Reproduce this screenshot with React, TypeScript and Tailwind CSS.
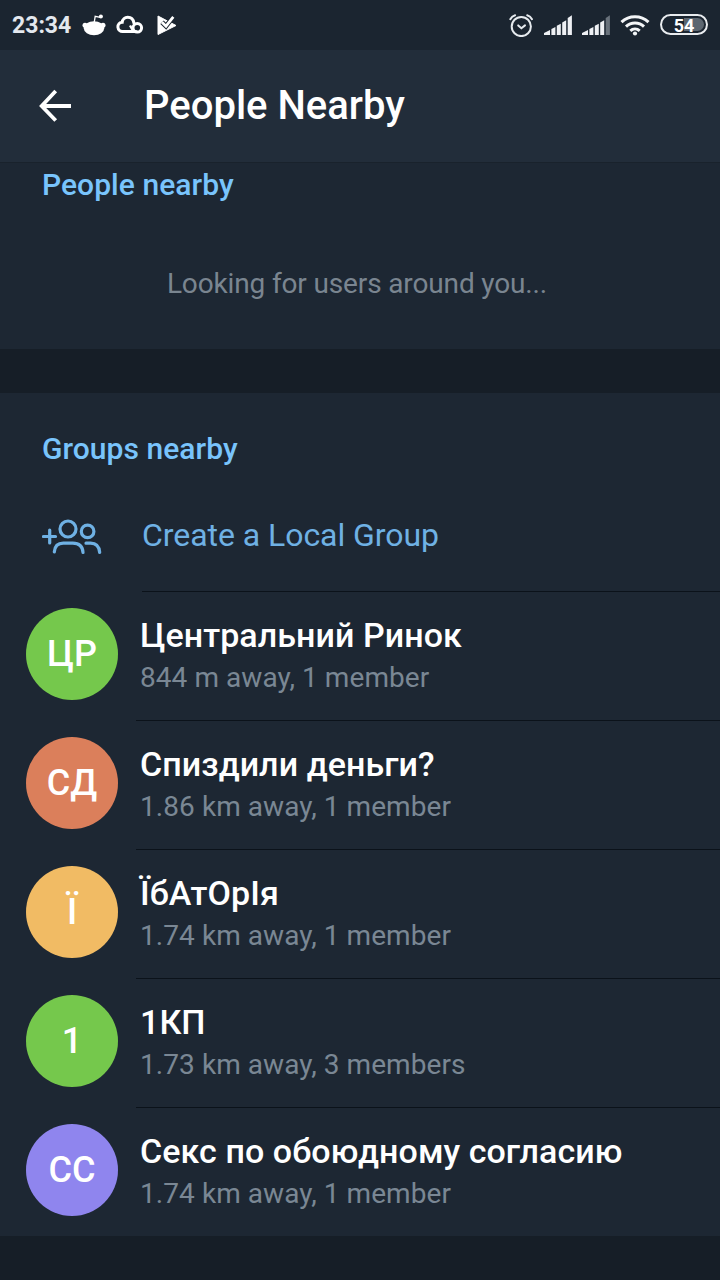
interface Group {
  initials: string;
  name: string;
  info: string;
  color: string;
}

const GROUPS: Group[] = [
  { initials: 'ЦР', name: 'Центральний Ринок', info: '844 m away, 1 member', color: 'bg-[#75c84c]' },
  { initials: 'СД', name: 'Спиздили деньги?', info: '1.86 km away, 1 member', color: 'bg-[#db7f5b]' },
  { initials: 'Ї', name: 'ЇбАтОрІя', info: '1.74 km away, 1 member', color: 'bg-[#f1bb64]' },
  { initials: '1', name: '1КП', info: '1.73 km away, 3 members', color: 'bg-[#75c84c]' },
  { initials: 'СС', name: 'Секс по обоюдному согласию', info: '1.74 km away, 1 member', color: 'bg-[#8f85ee]' },
];

function RedditIcon() {
  return (
    <svg className="ml-3 w-6 h-6 shrink-0" viewBox="0 0 24 24" fill="#fff">
      <ellipse cx="12" cy="15.200" rx="10.200" ry="7" />
      <circle cx="3" cy="12.200" r="2.500" />
      <circle cx="21" cy="12.200" r="2.500" />
      <path d="M12.200 9.500l1-6.200 5 1" fill="none" stroke="#fff" strokeWidth="1.300" />
      <circle cx="18.900" cy="3.400" r="2" />
    </svg>
  );
}

function CloudIcon() {
  return (
    <svg className="ml-[10px] w-7 h-6 shrink-0" viewBox="0 0 28 24" fill="none" stroke="#fff">
      <path d="M20 18.500H6.800a4.600 4.600 0 01-.6-9.200C6.500 6 9 4.300 11.700 4.300c3.400 0 5.700 2.400 6.200 5.700" strokeWidth="3" strokeLinecap="round" />
      <path d="M14 12.500l3.500 6" strokeWidth="2.400" />
      <circle cx="21.300" cy="14.800" r="4.300" strokeWidth="3" />
    </svg>
  );
}

function PlayCheckIcon() {
  return (
    <svg className="ml-[13px] w-5 h-6 shrink-0" viewBox="0 0 20 24">
      <path d="M1 3v18.500L19 12.500 1 3z" fill="#fff" stroke="#fff" strokeLinejoin="round" />
      <path d="M5 9.200l4 4L16 4" fill="none" stroke="#1b2530" strokeWidth="4.800" />
      <path d="M5 9.200l4 4 7.300-9.300" fill="none" stroke="#fff" strokeWidth="2.800" />
    </svg>
  );
}

function AlarmIcon() {
  return (
    <svg className="w-6 h-6 shrink-0" viewBox="0 0 24 24" fill="none" stroke="#e6eaee" strokeWidth="2" strokeLinecap="round">
      <circle cx="12.300" cy="13.500" r="9.600" />
      <path d="M9.200 12.400l3.200 2.800 3.600-2.800" />
      <path d="M1.300 6.200Q2.800 3.200 6.100 2.200M23 6.200Q21.500 3.200 18.200 2.200" />
    </svg>
  );
}

function SignalIcon({ weak }: { weak?: boolean }) {
  return (
    <svg className="w-7 h-5 shrink-0" viewBox="0 0 28 20" fill="#eef0f3">
      <path d="M0 20v-2L6 15v5zM7.400 20v-6l4-2v8zM12.800 20v-9.200l4-2V20zM18.200 20V7.400l4-2.200V20z" />
      <path d="M23.700 20V3l4.200-2.700V20z" fill={weak ? '#69727b' : '#eef0f3'} />
    </svg>
  );
}

function WifiIcon() {
  return (
    <svg className="ml-[10px] w-[30px] h-[22px] shrink-0" viewBox="0 0 30 22" fill="none" stroke="#f3f5f7" strokeWidth="3">
      <path d="M1.500 8.200a19.500 19.500 0 0127 0" />
      <path d="M6 12.700a13 13 0 0118 0" />
      <path d="M10.300 16.800a7 7 0 019.400 0" />
      <circle cx="15" cy="19.500" r="2.100" fill="#f3f5f7" stroke="none" />
    </svg>
  );
}

function StatusBar() {
  return (
    <div className="flex items-center h-[50px] pl-3 pr-3 bg-[#1b2530]">
      <span className="w-[58px] text-[23px] leading-[52px] pt-px font-bold text-[#e3e8ee]">23:34</span>
      <RedditIcon />
      <CloudIcon />
      <PlayCheckIcon />
      <div className="ml-auto flex items-center">
        <AlarmIcon />
        <div className="ml-[11px] flex gap-[10px]">
          <SignalIcon />
          <SignalIcon weak />
        </div>
        <WifiIcon />
        <div className="ml-[10px] -mt-px w-12 h-[21px] rounded-full border-2 border-[#e9ecef] p-[2px]">
          <div className="h-full rounded-full bg-linear-to-r from-transparent from-50% to-[#5c6670] to-50% flex items-center justify-center text-[18px] leading-[18px] font-bold text-white">
            <span className="pt-[2px]">54</span>
          </div>
        </div>
      </div>
    </div>
  );
}

function AddGroupIcon() {
  return (
    <svg className="w-[60px] h-9 shrink-0" viewBox="0 0 60 36" fill="none" stroke="#6fb1e4" strokeWidth="3.200" strokeLinecap="round">
      <path d="M1.500 17.500H13.500M7.700 11v13" />
      <circle cx="26" cy="10" r="8" />
      <circle cx="45.600" cy="12.400" r="6.300" />
      <path d="M12.300 33c.5-6 3.700-8.800 9-8.800h9.500c6 0 9.800 3 10.200 9.300" />
      <path d="M44 24.200h4.500c5.500 0 8.700 3.300 9.200 9.300" />
    </svg>
  );
}

function GroupRow({ group, last }: { group: Group; last: boolean }) {
  return (
    <div className={`flex pl-[26px] ${last ? 'h-32' : 'h-[129px]'}`}>
      <div
        className={`mt-4 w-[92px] h-[92px] shrink-0 rounded-full flex items-center justify-center text-[36px] leading-[92px] font-medium text-white ${group.color}`}
      >
        {group.initials}
      </div>
      <div className={`ml-[18px] pl-1 flex-1 pt-[23px] ${last ? '' : 'border-b border-[#0b121a]'}`}>
        <div className="text-[34px] leading-10 tracking-[0.06px] font-medium text-white whitespace-nowrap">
          {group.name}
        </div>
        <div className="mt-[5px] text-[28px] leading-9 tracking-[0.07px] text-[#7a8794] whitespace-nowrap">
          {group.info}
        </div>
      </div>
    </div>
  );
}

export default function App() {
  return (
    <div className="w-[720px] h-[1280px] overflow-hidden bg-[#161e27] font-['Roboto',sans-serif]">
      <StatusBar />

      <header className="flex items-center h-28 bg-[#222d3a] pl-[38px]">
        <svg className="w-[34px] h-[34px] shrink-0" viewBox="0 0 34 34" fill="none" stroke="#fff" strokeWidth="3.800">
          <path d="M17.700 2L3.700 17l14 14.500M3.500 17H33" />
        </svg>
        <h1 className="ml-[72px] text-[40px] leading-[48px] font-medium text-white">People Nearby</h1>
      </header>

      <section className="h-[187px] bg-[#1d2733] border-t border-[#19222c]">
        <h2 className="pl-[42px] pt-1 text-[30px] leading-9 tracking-[0.05px] font-medium text-[#79c4fc]">
          People nearby
        </h2>
        <p className="mt-[63px] pr-[6px] text-center text-[28px] leading-9 tracking-[-0.14px] text-[#7a8590]">
          Looking for users around you...
        </p>
      </section>

      <section className="mt-11 bg-[#1d2733]">
        <h2 className="pl-[42px] pt-[38px] text-[30px] leading-9 tracking-[0.05px] font-medium text-[#79c4fc]">
          Groups nearby
        </h2>
        <div className="flex h-[125px] pl-[42px]">
          <div className="mt-[52px]">
            <AddGroupIcon />
          </div>
          <div className="ml-10 flex-1 border-b border-[#0b121a] pt-[48px] text-[32px] leading-10 tracking-[-0.05px] text-[#6fb1e4]">
            Create a Local Group
          </div>
        </div>
        {GROUPS.map((group, i) => (
          <GroupRow key={group.name} group={group} last={i === GROUPS.length - 1} />
        ))}
      </section>
    </div>
  );
}
